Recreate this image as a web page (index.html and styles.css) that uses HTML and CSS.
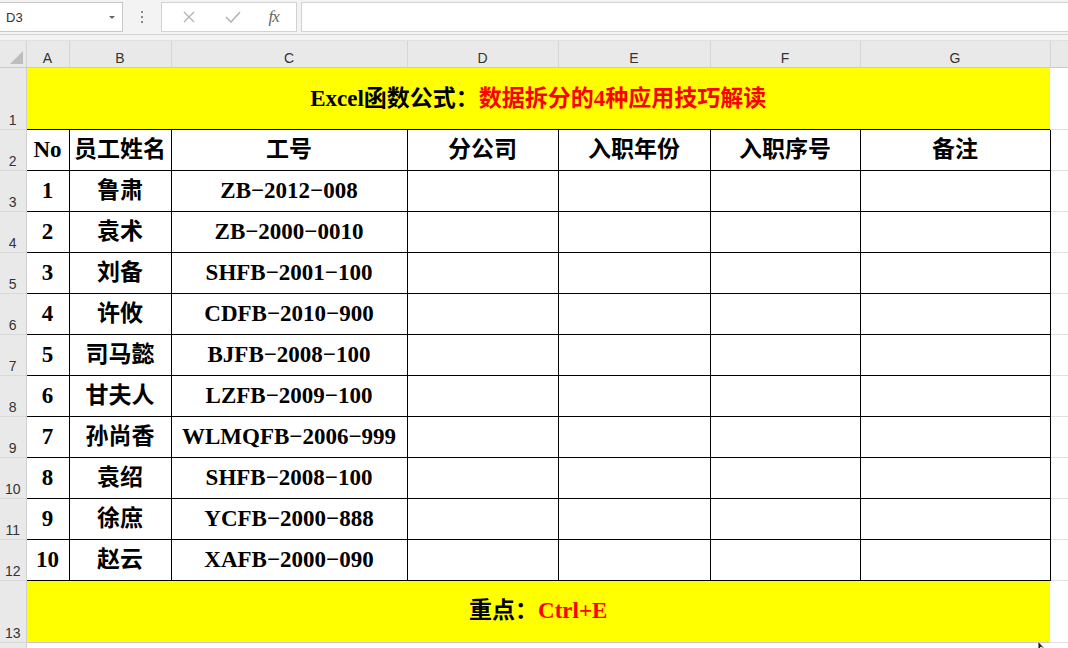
FILE: index.html
```html
<!DOCTYPE html>
<html>
<head>
<meta charset="utf-8">
<link rel="stylesheet" href="styles.css">
</head>
<body>
<div class="fbar">
  <div class="namebox"><span>D3</span><span class="caret"></span></div>
  <div class="dots"><i></i><i></i><i></i></div>
  <div class="fbtns">
    <svg class="ico" width="16" height="16" viewBox="0 0 16 16"><path d="M3 3 L13 13 M13 3 L3 13" stroke="#b5b5b5" stroke-width="1.4" fill="none"/></svg>
    <svg class="ico" width="18" height="16" viewBox="0 0 18 16"><path d="M2 8 L7 13 L16 3" stroke="#b5b5b5" stroke-width="1.6" fill="none"/></svg>
    <span class="fx">fx</span>
  </div>
  <div class="finput"></div>
</div>
<div class="gap"></div>
<table class="sheet">
  <colgroup>
    <col class="c-rh"><col class="c-a"><col class="c-b"><col class="c-c"><col class="c-d"><col class="c-e"><col class="c-f"><col class="c-g"><col class="c-x">
  </colgroup>
  <tr class="r-colhdr">
    <th class="corner"><span class="tri"></span></th><th>A</th><th>B</th><th>C</th><th>D</th><th>E</th><th>F</th><th>G</th><th class="hx"></th>
  </tr>
  <tr class="r-tall">
    <th class="rh">1</th>
    <td colspan="7" class="banner">Excel函数公式：<span class="red">数据拆分的4种应用技巧解读</span></td>
    <td class="blank"></td>
  </tr>
  <tr class="r-row hdr">
    <th class="rh">2</th><td>No</td><td>员工姓名</td><td>工号</td><td>分公司</td><td>入职年份</td><td>入职序号</td><td>备注</td><td class="blank"></td>
  </tr>
  <tr class="r-row"><th class="rh">3</th><td>1</td><td>鲁肃</td><td>ZB−2012−008</td><td></td><td></td><td></td><td></td><td class="blank"></td></tr>
  <tr class="r-row"><th class="rh">4</th><td>2</td><td>袁术</td><td>ZB−2000−0010</td><td></td><td></td><td></td><td></td><td class="blank"></td></tr>
  <tr class="r-row"><th class="rh">5</th><td>3</td><td>刘备</td><td>SHFB−2001−100</td><td></td><td></td><td></td><td></td><td class="blank"></td></tr>
  <tr class="r-row"><th class="rh">6</th><td>4</td><td>许攸</td><td>CDFB−2010−900</td><td></td><td></td><td></td><td></td><td class="blank"></td></tr>
  <tr class="r-row"><th class="rh">7</th><td>5</td><td>司马懿</td><td>BJFB−2008−100</td><td></td><td></td><td></td><td></td><td class="blank"></td></tr>
  <tr class="r-row"><th class="rh">8</th><td>6</td><td>甘夫人</td><td>LZFB−2009−100</td><td></td><td></td><td></td><td></td><td class="blank"></td></tr>
  <tr class="r-row"><th class="rh">9</th><td>7</td><td>孙尚香</td><td>WLMQFB−2006−999</td><td></td><td></td><td></td><td></td><td class="blank"></td></tr>
  <tr class="r-row"><th class="rh">10</th><td>8</td><td>袁绍</td><td>SHFB−2008−100</td><td></td><td></td><td></td><td></td><td class="blank"></td></tr>
  <tr class="r-row"><th class="rh">11</th><td>9</td><td>徐庶</td><td>YCFB−2000−888</td><td></td><td></td><td></td><td></td><td class="blank"></td></tr>
  <tr class="r-row"><th class="rh">12</th><td>10</td><td>赵云</td><td>XAFB−2000−090</td><td></td><td></td><td></td><td></td><td class="blank"></td></tr>
  <tr class="r-tall">
    <th class="rh">13</th>
    <td colspan="7" class="banner foot">重点：<span class="red">Ctrl+E</span></td>
    <td class="blank"></td>
  </tr>
  <tr class="r-rest"><th class="rh"></th><td class="blank" colspan="8"></td></tr>
</table>
<svg class="cursor" width="12" height="10" viewBox="0 0 12 10"><path d="M1 1 L1 10 L4 7 L9 10 Z" fill="#222" stroke="#fff" stroke-width="0.8"/></svg>
</body>
</html>
```
FILE: styles.css
```css
html, body { margin: 0; padding: 0; }
body {
  width: 1068px;
  height: 648px;
  overflow: hidden;
  background: #ffffff;
  font-family: "Liberation Serif", "Noto Sans CJK SC", serif;
  position: relative;
}
.fbar {
  height: 35px;
  background: #f3f3f3;
  display: flex;
  align-items: stretch;
  border-bottom: 1px solid #d4d4d4;
  box-sizing: border-box;
  padding: 2px 0 2px 0;
}
.namebox {
  width: 123px;
  background: #fff;
  border: 1px solid #c8c8c8;
  border-left: none;
  box-sizing: border-box;
  display: flex;
  align-items: center;
  justify-content: space-between;
  padding: 0 7px 0 6px;
  font-family: "Liberation Sans", "Noto Sans", sans-serif;
  font-size: 13px;
  color: #333;
}
.caret {
  width: 0; height: 0;
  border-left: 3px solid transparent;
  border-right: 3px solid transparent;
  border-top: 3px solid #666;
}
.dots {
  width: 38px;
  display: flex;
  flex-direction: column;
  align-items: center;
  justify-content: center;
  gap: 3px;
}
.dots i { display: block; width: 2px; height: 2px; background: #8a8a8a; }
.fbtns {
  width: 136px;
  background: #fff;
  border: 1px solid #d2d2d2;
  box-sizing: border-box;
  display: flex;
  align-items: center;
  justify-content: space-around;
  padding: 0 4px 0 6px;
}
.fx {
  font-family: "Liberation Serif", serif;
  font-style: italic;
  font-size: 17px;
  color: #666;
  letter-spacing: -1px;
}
.finput {
  flex: 1;
  margin-left: 4px;
  background: #fff;
  border: 1px solid #d2d2d2;
  border-right: none;
}
.gap { height: 5px; background: #f3f3f3; border-bottom: 1px solid #e0e0e0; }
.sheet {
  border-collapse: collapse;
  table-layout: fixed;
  width: 1068px;
}
.c-rh { width: 26px; }
.c-a { width: 43px; }
.c-b { width: 102px; }
.c-c { width: 236px; }
.c-d { width: 151px; }
.c-e { width: 152px; }
.c-f { width: 150px; }
.c-g { width: 190px; }
.c-x { width: 18px; }
.r-colhdr { height: 26px; }
.r-colhdr th {
  background: #e9e9e9;
  border-left: 1px solid #d6d6d6;
  border-bottom: 1px solid #c9c9dd;
  font-family: "Liberation Sans", "Noto Sans", sans-serif;
  font-weight: normal;
  font-size: 14px;
  color: #333;
  padding: 5px 0 0 0;
  line-height: 18px;
  vertical-align: bottom;
}
.r-colhdr th.corner { border-left: none; position: relative; }
.tri {
  position: absolute;
  right: 3px; bottom: 3px;
  width: 0; height: 0;
  border-left: 13px solid transparent;
  border-bottom: 13px solid #bdbdbd;
}
.r-colhdr th.hx { background: #e9e9e9; }
.rh {
  background: #e9e9e9;
  border-right: 1px solid #cfcfcf;
  border-bottom: 1px solid #d9d9d9;
  font-family: "Liberation Sans", "Noto Sans", sans-serif;
  font-weight: normal;
  font-size: 14px;
  color: #333;
  vertical-align: bottom;
  text-align: center;
  padding: 0 0 1px 0;
  line-height: 16px;
}
.r-tall { height: 62px; }
.r-row { height: 41px; }
.r-rest { height: 8px; }
.sheet td {
  border: 1px solid #000;
  text-align: center;
  vertical-align: middle;
  font-family: "Liberation Serif", "Noto Sans CJK SC", serif;
  font-weight: bold;
  font-size: 23px;
  color: #000;
  padding: 0;
  line-height: 26px;
  white-space: nowrap;
  overflow: hidden;
}
.sheet td.banner {
  background: #ffff00;
  border: none;
  font-size: 23px;
  padding-top: 1px;
}
.sheet td.foot { padding-top: 0; }
.red { color: #ff0000; }
.sheet td.blank {
  border: none;
  border-left: 1px solid #000;
  border-bottom: 1px solid #e1e1e1;
  background: #fff;
}
.sheet .r-tall td.blank { border-left: none; }
.sheet .r-rest td.blank { border: none; border-top: 1px solid #c8c8c8; }
.r-rest .rh { border-bottom: none; }
.cursor { position: absolute; left: 1037px; top: 640px; }
```
